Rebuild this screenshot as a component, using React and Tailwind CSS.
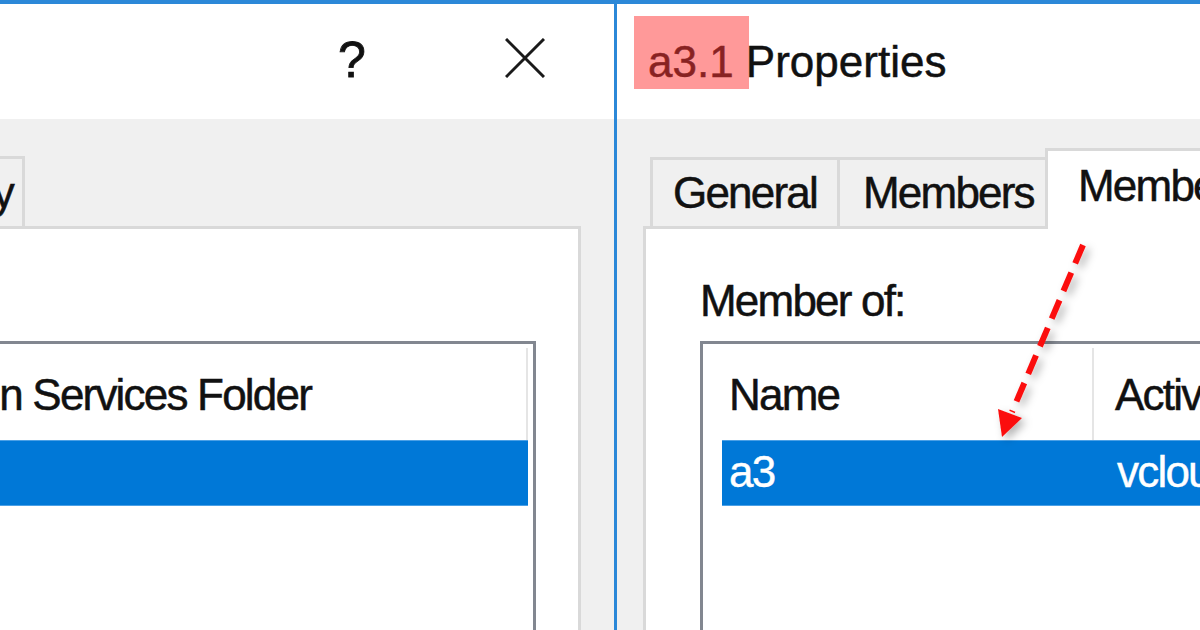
export default function App() {
  return (
    <div className="relative w-[1200px] h-[630px] overflow-hidden bg-[#f0f0f0] text-[#111] font-['Liberation_Sans',Arial,sans-serif]">
      <div className="h-[4px] bg-[#2b88d8]" />
      <div className="flex h-[626px]">
        <LeftDialog />
        <div className="w-[3px] shrink-0 bg-[#2b88d8]" />
        <RightDialog />
      </div>
      <Annotations />
    </div>
  );
}

function LeftDialog() {
  return (
    <div className="flex w-[614px] shrink-0 flex-col">
      {/* caption bar */}
      <div className="flex h-[115px] shrink-0 items-start justify-end bg-white pr-[69px]">
        <span className="mt-[31px] w-[24px] text-[50px] leading-none [-webkit-text-stroke:0.8px_#111]">?</span>
        <svg className="ml-[143px] mt-[34px]" width="40" height="40" viewBox="0 0 40 40">
          <path d="M1 1 L39 39 M39 1 L1 39" stroke="#1a1a1a" strokeWidth="3" fill="none" />
        </svg>
      </div>

      <div className="flex flex-1 flex-col pt-[37px] text-[44px] leading-none tracking-[-1.8px] [-webkit-text-stroke:0.5px_#111]">
        <div className="flex h-[70px] shrink-0">
          <div className="flex w-[25px] shrink-0 justify-end overflow-hidden whitespace-nowrap border-t-[3px] border-r-[3px] border-[#d9d9d9] pr-[9px] pt-[12px]">
            Security
          </div>
        </div>
        <div className="flex w-[581px] flex-1 flex-col border-t-[3px] border-r-[3px] border-[#d9d9d9] bg-white pt-[112px] pr-[42px]">
          <div className="flex-1 border-t-[3px] border-r-[3px] border-[#828790]">
            <div className="flex h-[96px]">
              <div className="flex w-[526px] shrink-0 pt-[29px]">
                <div className="flex w-[311px] shrink-0 justify-end whitespace-nowrap">
                  Active Directory Domain Services Folder
                </div>
              </div>
              <div className="mt-[4px] h-[92px] w-[2px] shrink-0 bg-[#e5e5e5]" />
            </div>
            <div className="h-[66px] w-[528px] border-y border-[#4ba0e6] bg-[#0078d7]" />
          </div>
        </div>
      </div>
    </div>
  );
}

function RightDialog() {
  return (
    <div className="flex min-w-0 flex-1 flex-col">
      {/* caption bar */}
      <div className="h-[115px] shrink-0 bg-white pl-[31px] pt-[36px]">
        <span className="relative whitespace-nowrap text-[44px] leading-none [-webkit-text-stroke:0.5px_#111]">
          a3.1 Properties
          <span className="absolute left-[-14px] top-[-21px] h-[73px] w-[115px] bg-[#ff3333]/50" />
        </span>
      </div>

      <div className="flex flex-1 flex-col bg-[#f0f0f0] pl-[26px] pt-[29px] text-[44px] leading-none tracking-[-1.8px] [-webkit-text-stroke:0.5px_#111]">
        <div className="ml-[7px] flex h-[78px] shrink-0 items-end whitespace-nowrap">
          <div className="h-[69px] w-[187px] shrink-0 border-l-[3px] border-t-[3px] border-[#d9d9d9] pl-[20px] pt-[11px]">
            General
          </div>
          <div className="h-[69px] w-[208px] shrink-0 border-l-[3px] border-t-[3px] border-[#d9d9d9] pl-[23px] pt-[11px]">
            Members
          </div>
          <div className="relative z-10 mb-[-3px] h-[81px] w-[260px] shrink-0 border-x-[3px] border-t-[3px] border-[#d9d9d9] bg-white pl-[30px] pt-[13px]">
            Member Of
          </div>
        </div>

        <div className="flex flex-1 flex-col border-l-[3px] border-t-[3px] border-[#d9d9d9] bg-white pl-[54px] pt-[50px]">
          <div className="whitespace-nowrap">Member of:</div>
          <div className="mt-[18px] flex-1 border-l-[3px] border-t-[3px] border-[#828790]">
            <div className="flex h-[96px] whitespace-nowrap">
              <div className="w-[389px] shrink-0 pl-[26px] pt-[29px]">Name</div>
              <div className="mt-[4px] h-[92px] w-[2px] shrink-0 bg-[#e5e5e5]" />
              <div className="shrink-0 pl-[21px] pt-[29px]">Active Directory Domain Services Folder</div>
            </div>
            <div className="ml-[19px] flex h-[66px] whitespace-nowrap border-y border-[#4ba0e6] bg-[#0078d7] text-white [-webkit-text-stroke:0.4px_#fff]">
              <div className="w-[370px] shrink-0 pl-[7px] pt-[9px]">a3</div>
              <div className="shrink-0 pl-[25px] pt-[9px]">vcloud.local/Users</div>
            </div>
          </div>
        </div>
      </div>
    </div>
  );
}

function Annotations() {
  return (
    <svg className="pointer-events-none absolute left-0 top-0" width="1200" height="630" viewBox="0 0 1200 630">
      <defs>
        <filter id="shade" x="-50%" y="-20%" width="200%" height="140%">
          <feDropShadow dx="4" dy="4" stdDeviation="4" floodColor="#000" floodOpacity="0.3" />
        </filter>
      </defs>
      <line x1="1058" y1="219.5" x2="1200" y2="219.5" stroke="#fb1010" strokeWidth="6" strokeDasharray="20 10" />
      <g filter="url(#shade)">
        <line x1="1083" y1="245" x2="1012" y2="412" stroke="#fb1010" strokeWidth="6" strokeDasharray="20 10" />
        <polygon points="1002,437 998,409 1022,418" fill="#fb1010" />
      </g>
    </svg>
  );
}
